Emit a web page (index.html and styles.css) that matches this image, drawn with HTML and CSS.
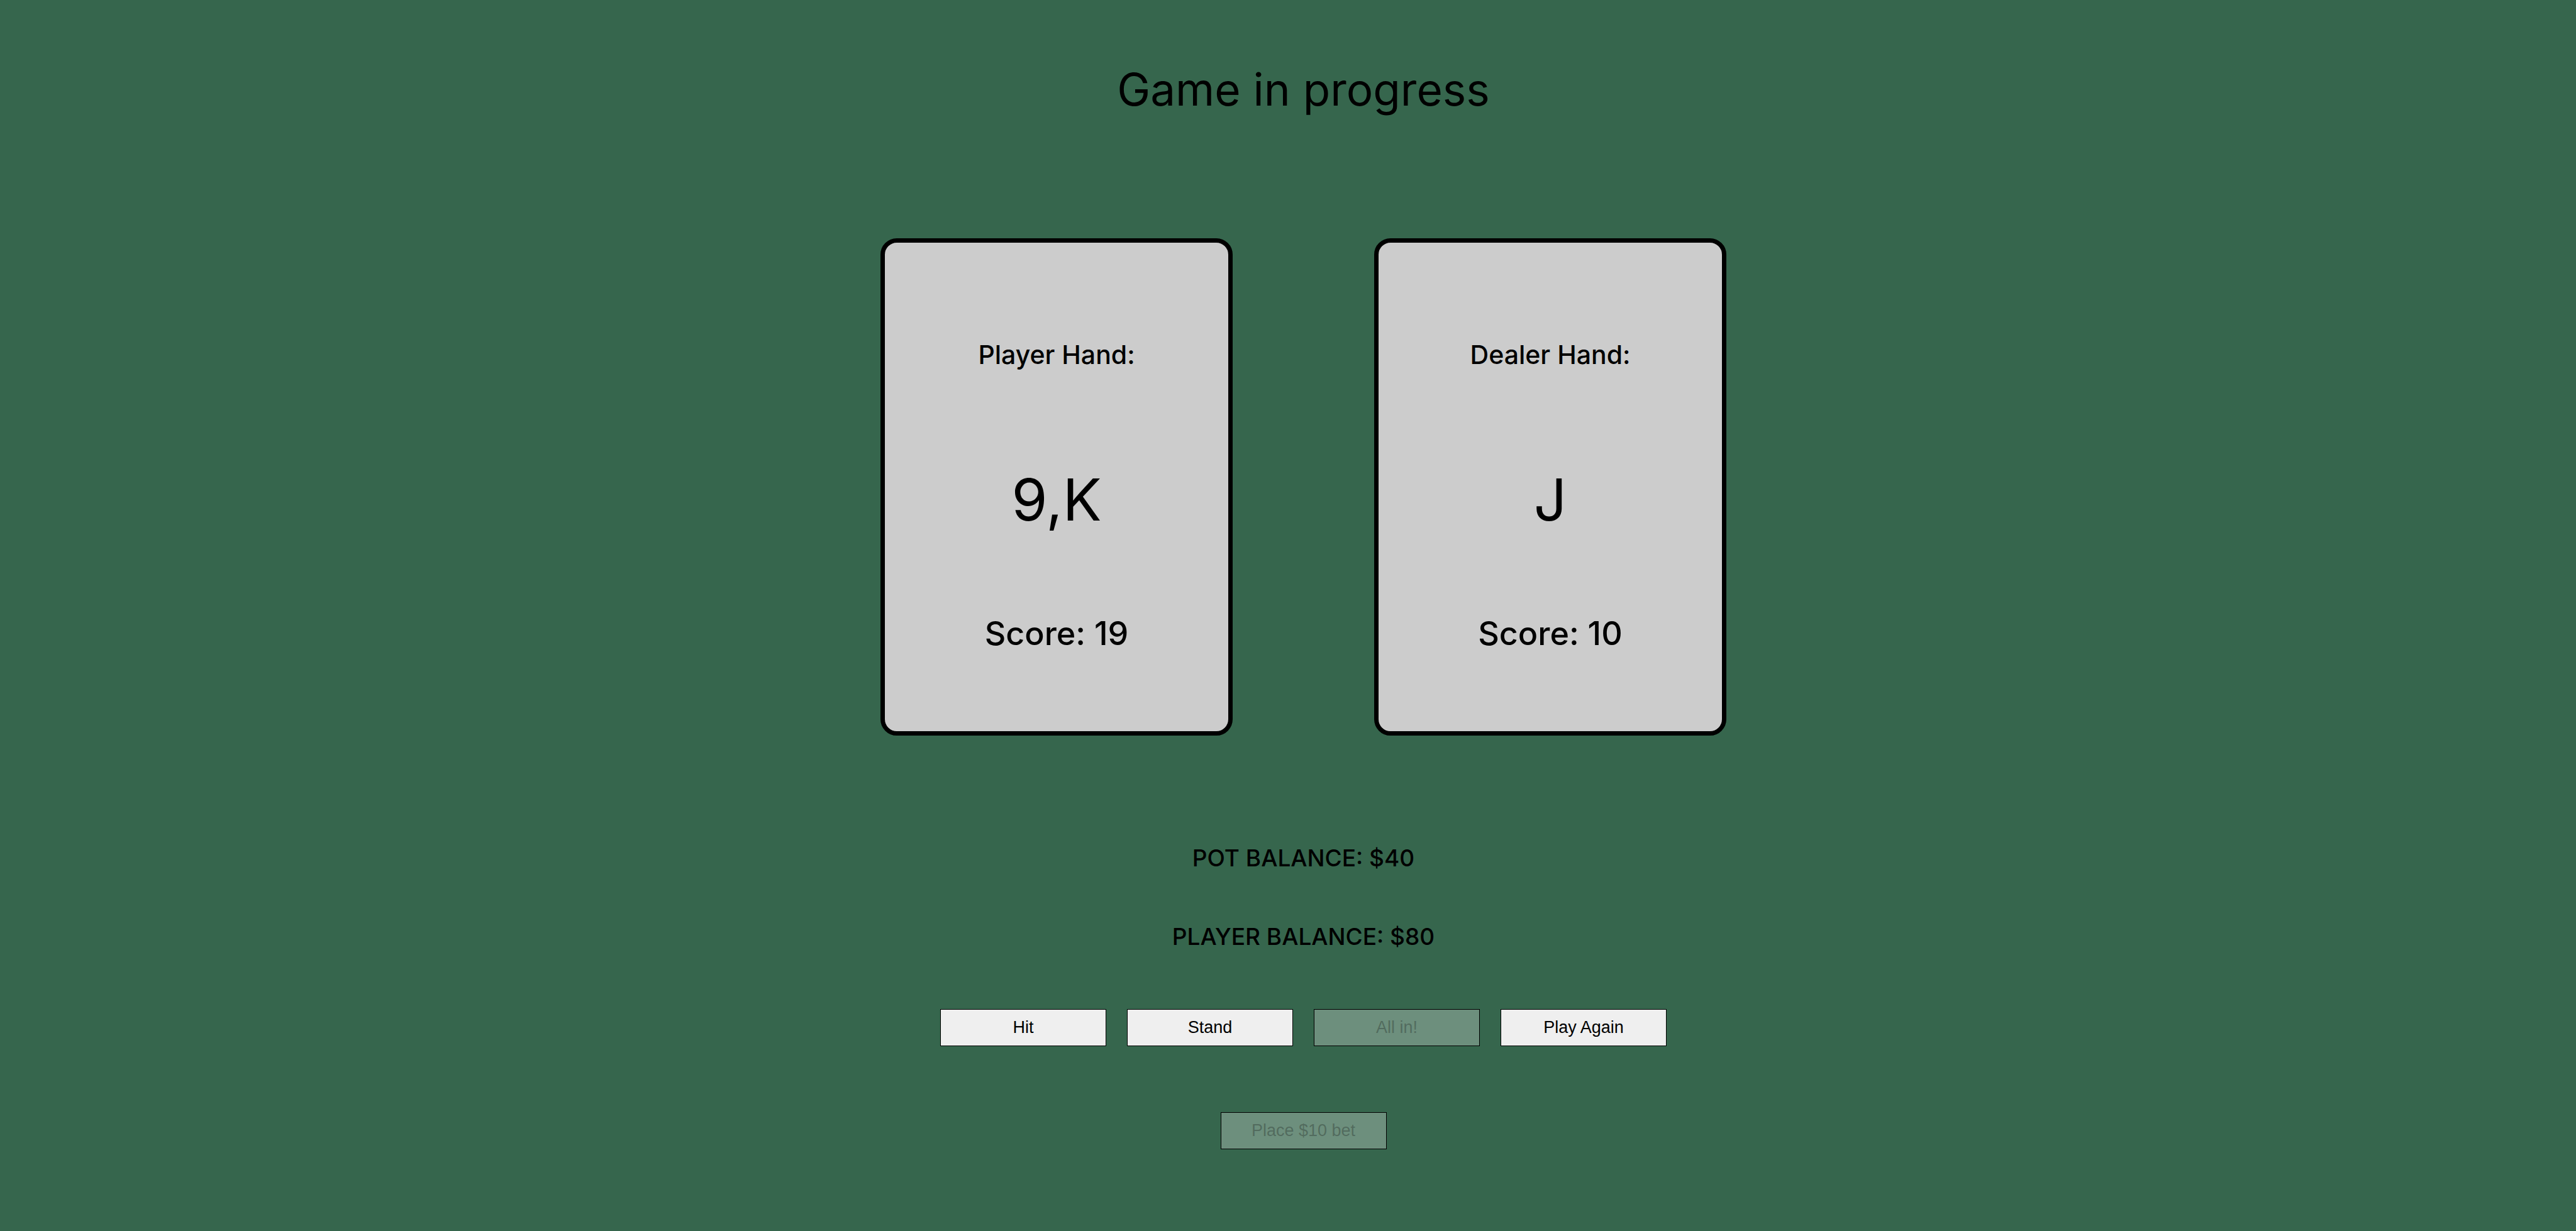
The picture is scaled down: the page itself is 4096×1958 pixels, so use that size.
FILE: index.html
```html
<!DOCTYPE html>
<html lang="en">
<head>
  <meta charset="utf-8">
  <meta name="viewport" content="width=device-width, initial-scale=1">
  <title>Blackjack</title>
  <link rel="stylesheet" href="styles.css">
</head>
<body>
  <main class="table">
    <h1 class="status">Game in progress</h1>

    <div class="hands">
      <section class="card">
        <h2 class="card-title">Player Hand:</h2>
        <p class="card-values">9,K</p>
        <p class="card-score">Score: 19</p>
      </section>
      <section class="card">
        <h2 class="card-title">Dealer Hand:</h2>
        <p class="card-values">J</p>
        <p class="card-score">Score: 10</p>
      </section>
    </div>

    <div class="balances">
      <p class="balance">POT BALANCE: $40</p>
      <p class="balance">PLAYER BALANCE: $80</p>
    </div>

    <div class="actions">
      <button class="button" type="button">Hit</button>
      <button class="button" type="button">Stand</button>
      <button class="button" type="button" disabled>All in!</button>
      <button class="button" type="button">Play Again</button>
    </div>

    <div class="bet">
      <button class="button" type="button" disabled>Place $10 bet</button>
    </div>
  </main>
</body>
</html>
```
FILE: styles.css
```css
* {
  box-sizing: border-box;
  margin: 0;
}

body {
  background: #36664d;
  color: #000;
  font-family: "Inter", "Open Sans", sans-serif;
}

.table {
  display: flex;
  flex-direction: column;
  align-items: center;
  min-height: 100vh;
  padding: 92px 0 92px 49px;
}

.status {
  font-size: 71px;
  font-weight: 400;
  line-height: 100px;
}

.hands {
  display: flex;
  gap: 225px;
  margin-top: 187px;
}

.card {
  display: flex;
  flex-direction: column;
  align-items: center;
  width: 560px;
  padding: 148px 0 115px;
  border: 7px solid #000;
  border-radius: 26px;
  background: #ccc;
}

.card-title {
  font-size: 41px;
  font-weight: 500;
  line-height: 60px;
}

.card-values {
  margin-top: 141px;
  font-size: 92px;
  line-height: 120px;
}

.card-score {
  margin-top: 113px;
  font-size: 52px;
  font-weight: 500;
  line-height: 80px;
}

.balances {
  display: flex;
  flex-direction: column;
  align-items: center;
  gap: 65px;
  margin-top: 165px;
}

.balance {
  font-size: 37px;
  font-weight: 500;
  line-height: 60px;
}

.actions {
  display: flex;
  gap: 33px;
  margin-top: 85px;
}

.bet {
  margin-top: 105px;
}

.button {
  width: 264px;
  height: 59px;
  padding: 0;
  border: 1px solid #000;
  border-radius: 0;
  background: #efefef;
  color: #000;
  font: 27px "Liberation Sans", Arial, sans-serif;
}

.button:disabled {
  background: rgba(239, 239, 239, 0.3);
  color: rgba(16, 16, 16, 0.3);
}
```
